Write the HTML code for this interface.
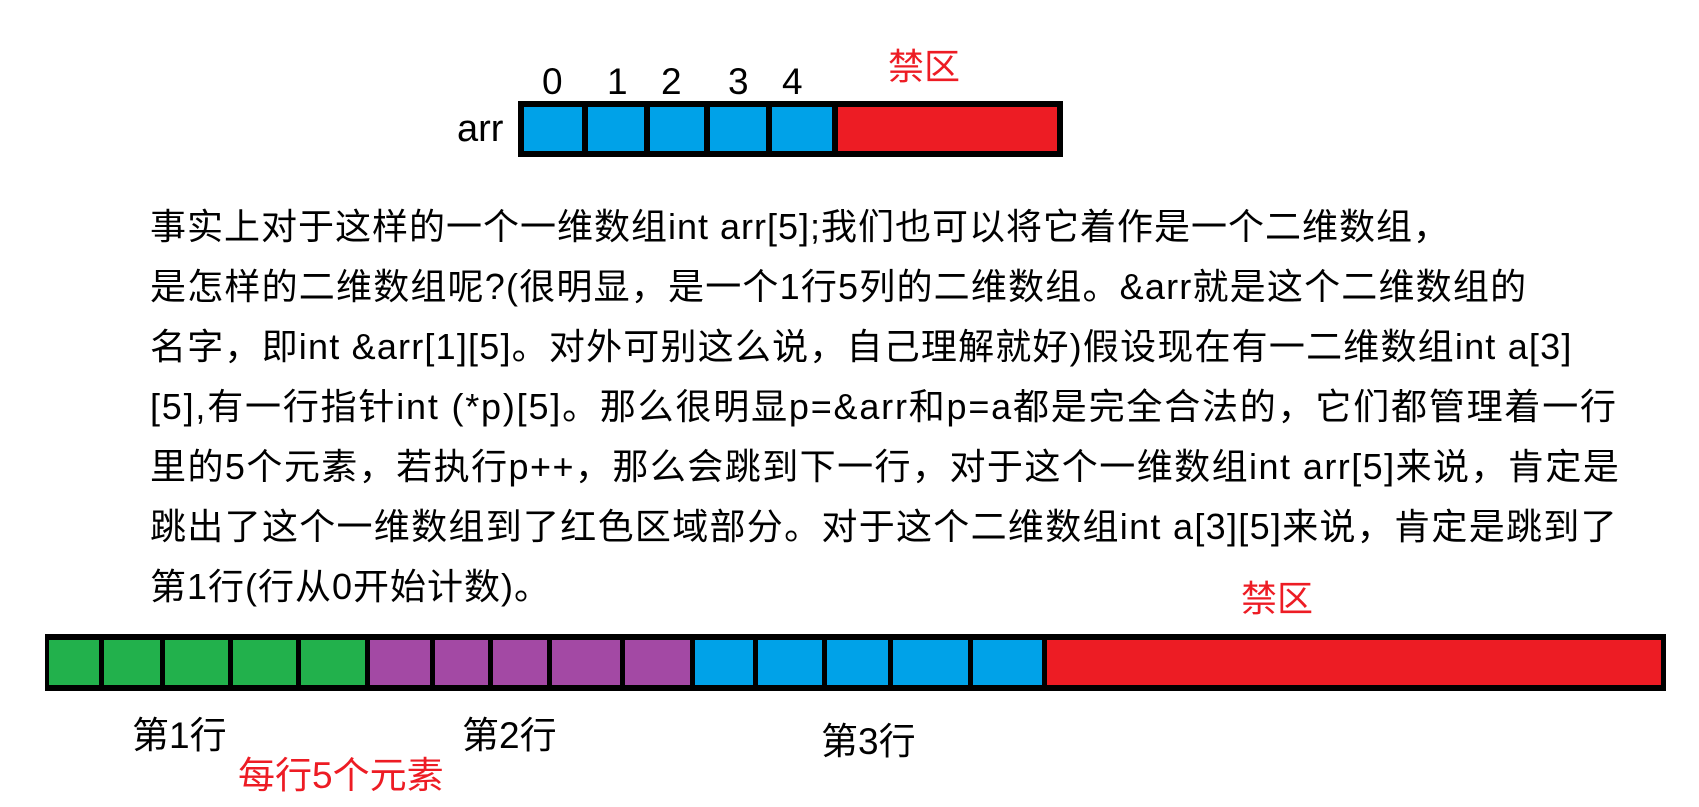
<!DOCTYPE html>
<html><head><meta charset="utf-8"><style>
body{margin:0;width:1699px;height:807px;background:#fff;position:relative;overflow:hidden;font-family:"Liberation Sans","Noto Sans CJK SC",sans-serif;}
.t{position:absolute;white-space:nowrap;line-height:1;}
.bar{position:absolute;background:#000;}
.c{position:absolute;top:6px;bottom:6px;}
.p{position:absolute;left:150px;font-size:36px;letter-spacing:1px;line-height:1;white-space:nowrap;color:#000;}
</style></head><body>
<div class="t" style="left:542px;top:63px;font-size:37px">0</div>
<div class="t" style="left:607px;top:63px;font-size:37px">1</div>
<div class="t" style="left:661px;top:63px;font-size:37px">2</div>
<div class="t" style="left:728px;top:63px;font-size:37px">3</div>
<div class="t" style="left:782px;top:63px;font-size:37px">4</div>
<div class="t" style="left:888px;top:49px;font-size:36px;color:#ed1c24">禁区</div>
<div class="t" style="left:457px;top:110px;font-size:38px">arr</div>
<div class="bar" style="left:518px;top:101px;width:545px;height:56px">
<div class="c" style="left:6px;width:58px;background:#00a2e8"></div>
<div class="c" style="left:70px;width:56px;background:#00a2e8"></div>
<div class="c" style="left:132px;width:54px;background:#00a2e8"></div>
<div class="c" style="left:192px;width:56px;background:#00a2e8"></div>
<div class="c" style="left:254px;width:60px;background:#00a2e8"></div>
<div class="c" style="left:320px;right:6px;background:#ed1c24"></div>
</div>
<div class="p" style="top:209px">事实上对于这样的一个一维数组int arr[5];我们也可以将它着作是一个二维数组，</div>
<div class="p" style="top:269px;letter-spacing:1.2px">是怎样的二维数组呢?(很明显，是一个1行5列的二维数组。&amp;arr就是这个二维数组的</div>
<div class="p" style="top:329px;letter-spacing:1.2px">名字，即int &amp;arr[1][5]。对外可别这么说，自己理解就好)假设现在有一二维数组int a[3]</div>
<div class="p" style="top:389px;letter-spacing:1.8px">[5],有一行指针int (*p)[5]。那么很明显p=&amp;arr和p=a都是完全合法的，它们都管理着一行</div>
<div class="p" style="top:449px;letter-spacing:1.45px">里的5个元素，若执行p++，那么会跳到下一行，对于这个一维数组int arr[5]来说，肯定是</div>
<div class="p" style="top:509px;letter-spacing:1.3px">跳出了这个一维数组到了红色区域部分。对于这个二维数组int a[3][5]来说，肯定是跳到了</div>
<div class="p" style="top:569px">第1行(行从0开始计数)。</div>
<div class="t" style="left:1241px;top:581px;font-size:36px;color:#ed1c24">禁区</div>
<div class="bar" style="left:45px;top:634px;width:1621px;height:57px">
<div class="c" style="left:4px;width:50px;background:#22b14c"></div>
<div class="c" style="left:59px;width:56px;background:#22b14c"></div>
<div class="c" style="left:120px;width:63px;background:#22b14c"></div>
<div class="c" style="left:188px;width:63px;background:#22b14c"></div>
<div class="c" style="left:256px;width:64px;background:#22b14c"></div>
<div class="c" style="left:325px;width:60px;background:#a349a4"></div>
<div class="c" style="left:390px;width:53px;background:#a349a4"></div>
<div class="c" style="left:448px;width:54px;background:#a349a4"></div>
<div class="c" style="left:507px;width:68px;background:#a349a4"></div>
<div class="c" style="left:580px;width:65px;background:#a349a4"></div>
<div class="c" style="left:650px;width:58px;background:#00a2e8"></div>
<div class="c" style="left:713px;width:64px;background:#00a2e8"></div>
<div class="c" style="left:782px;width:61px;background:#00a2e8"></div>
<div class="c" style="left:848px;width:75px;background:#00a2e8"></div>
<div class="c" style="left:928px;width:69px;background:#00a2e8"></div>
<div class="c" style="left:1002px;right:5px;background:#ed1c24"></div>
</div>
<div class="t" style="left:132px;top:717px;font-size:37px">第1行</div>
<div class="t" style="left:462px;top:717px;font-size:37px">第2行</div>
<div class="t" style="left:821px;top:723px;font-size:37px">第3行</div>
<div class="t" style="left:238px;top:757px;font-size:37px;color:#ed1c24">每行5个元素</div>
</body></html>
